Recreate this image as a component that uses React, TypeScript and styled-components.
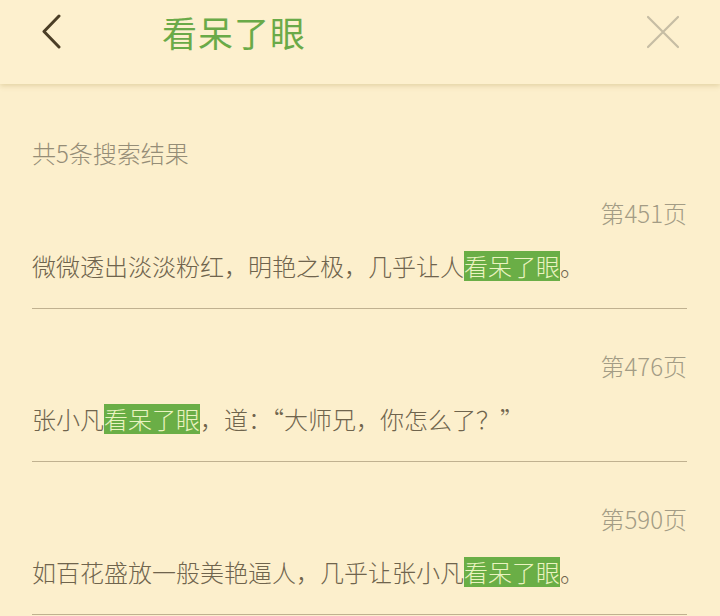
import React from 'react';
import styled, { createGlobalStyle } from 'styled-components';

type Result = {
  page: number
  before: string
  after: string
}

const keyword = '看呆了眼'

const results: Result[] = [
  { page: 451, before: '微微透出淡淡粉红，明艳之极，几乎让人', after: '。' },
  { page: 476, before: '张小凡', after: '，道：“大师兄，你怎么了？”' },
  { page: 590, before: '如百花盛放一般美艳逼人，几乎让张小凡', after: '。' },
]

function App() {
  return (
    <>
      <GlobalStyle />
      <Page>
        <Header>
          <BackButton aria-label="back">
            <svg width="24" height="36" viewBox="0 0 24 36">
              <polyline points="19,2 4,17.5 19,33" fill="none" stroke="#4b3e26" strokeWidth="3" strokeLinecap="round" strokeLinejoin="round" />
            </svg>
          </BackButton>
          <Title>{keyword}</Title>
          <CloseButton aria-label="close">
            <svg width="34" height="34" viewBox="0 0 34 34">
              <path d="M2 2 L32 32 M32 2 L2 32" stroke="#c6bda4" strokeWidth="2.2" strokeLinecap="round" />
            </svg>
          </CloseButton>
        </Header>
        <Content>
          <Summary>共5条搜索结果</Summary>
          {results.map(r => (
            <Item key={r.page}>
              <PageNo>第{r.page}页</PageNo>
              <Line>
                {r.before}
                <Mark>{keyword}</Mark>
                {r.after}
              </Line>
            </Item>
          ))}
        </Content>
      </Page>
    </>
  );
}

const GlobalStyle = createGlobalStyle`
  html, body {
    margin: 0;
    padding: 0;
    background: #fcefcc;
  }
  body {
    font-family: "Noto Sans CJK SC", "Noto Sans", sans-serif;
  }
`

const Page = styled.div`
  width: 720px;
  height: 616px;
  overflow: hidden;
  background: #fcefcc;
`

const Header = styled.header`
  height: 84px;
  box-sizing: border-box;
  padding: 0 40px 20px 40px;
  display: flex;
  align-items: center;
  background: #fdf0ce;
  box-shadow: 0 2px 5px rgba(170, 140, 70, 0.28);
  position: relative;
`

const BackButton = styled.div`
  width: 24px;
  height: 36px;
  display: flex;
`

const Title = styled.h1`
  margin: 0 0 0 98px;
  flex: 1;
  font-size: 35px;
  font-weight: 400;
  line-height: 40px;
  color: #6aaa48;
  letter-spacing: 1px;
`

const CloseButton = styled.div`
  width: 34px;
  height: 34px;
  display: flex;
`

const Content = styled.main`
  padding: 54px 33px 0 32px;
`

const Summary = styled.div`
  font-size: 24px;
  font-weight: 300;
  line-height: 30px;
  color: #958d77;
`

const Item = styled.section`
  padding: 42px 0 27px;
  border-bottom: 1.5px solid #c0b190;
  &:first-of-type {
    padding-top: 30px;
  }
`

const PageNo = styled.div`
  text-align: right;
  font-size: 24px;
  font-weight: 300;
  line-height: 30px;
  color: #a39c85;
  margin-bottom: 23px;
`

const Line = styled.p`
  margin: 0;
  font-size: 24px;
  font-weight: 300;
  line-height: 30px;
  color: #6f644d;
  white-space: nowrap;
`

const Mark = styled.span`
  display: inline-block;
  height: 30px;
  line-height: 30px;
  vertical-align: top;
  background: #6aae46;
  color: #eaf3c0;
`

export default App;
